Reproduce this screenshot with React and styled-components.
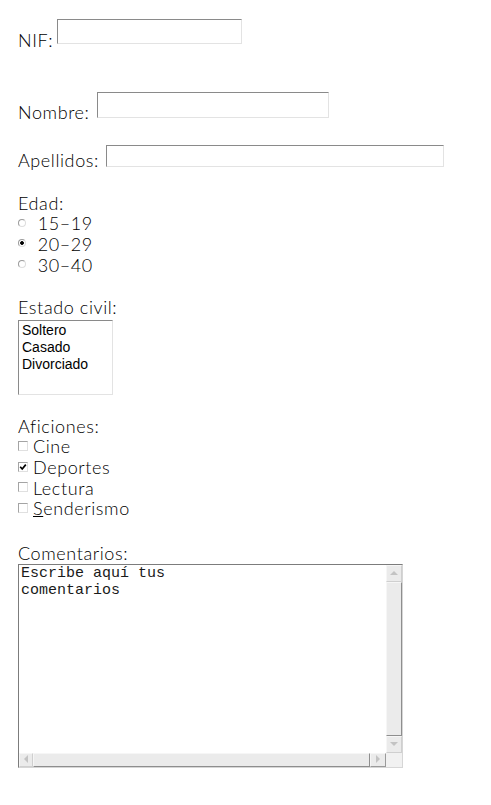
import React from 'react'
import styled, { createGlobalStyle } from 'styled-components'

const GlobalStyle = createGlobalStyle`
  html, body {
    margin: 0;
    padding: 0;
    background: #fff;
  }
  body {
    font-family: Lato, "Open Sans", sans-serif;
    font-weight: 300;
    font-size: 18px;
    line-height: 20.7px;
    letter-spacing: 0.6px;
    color: #000;
  }
`

const Form = styled.form`
  display: flex;
  flex-direction: column;
  align-items: flex-start;
  padding: 0 0 30px 18px;
`

const FieldRow = styled.div`
  display: flex;
  align-items: flex-start;
  gap: 3px;
  margin-top: ${p => p.$top}px;
`

const Label = styled.label`
  display: block;
  white-space: nowrap;
  margin-top: ${p => p.$drop || 0}px;
  ${p => p.$w && `width: ${p.$w}px;`}
`

const sunken = `
  border: 1px solid;
  border-color: #8a8a8a #e3e3e3 #e3e3e3 #8a8a8a;
`

const TextInput = styled.input`
  box-sizing: border-box;
  width: ${p => p.$w}px;
  height: ${p => p.$h}px;
  margin: 0;
  padding: 1px 3px;
  ${sunken}
  background: #fff;
  font: 14px "Liberation Sans", Arial, sans-serif;
  letter-spacing: 0;
  outline: none;
`

const Group = styled.div`
  display: flex;
  flex-direction: column;
  align-items: flex-start;
  margin-top: ${p => p.$top}px;
`

const OptionLine = styled.label`
  display: flex;
  align-items: flex-start;
  white-space: nowrap;
`

const Radio = styled.input.attrs({ type: 'radio' })`
  appearance: none;
  box-sizing: border-box;
  width: 8px;
  height: 8px;
  margin: 5.3px 11.7px 0 0;
  border-radius: 50%;
  border: 1px solid;
  border-color: #9c9c9c #dedede #dedede #9c9c9c;
  background: #fff;

  &:checked {
    background: radial-gradient(circle at center, #000 0 1.5px, #fff 2.2px);
  }
`

const CheckBox = styled.span`
  box-sizing: border-box;
  display: flex;
  align-items: center;
  justify-content: center;
  width: 10px;
  height: 10px;
  margin: 4.6px 5px 0 0;
  border: 1px solid;
  border-color: #a4a4a4 #e0e0e0 #e0e0e0 #a4a4a4;
  background: #fff;
`

const ListBox = styled.div`
  box-sizing: border-box;
  width: 95px;
  height: 75px;
  margin-top: 2.6px;
  padding: 1px 3px;
  ${sunken}
  font: 14px/17px "Liberation Sans", Arial, sans-serif;
  letter-spacing: 0;
  color: #000;
`

const ListItem = styled.div`
  white-space: nowrap;
`

const TextFrame = styled.div`
  box-sizing: border-box;
  width: 385px;
  height: 204px;
  margin-top: 0.6px;
  border: 1px solid;
  border-color: #7c7c7c #d6d6d6 #d6d6d6 #7c7c7c;
  display: grid;
  grid-template-columns: 1fr 16px;
  grid-template-rows: 1fr 14px;
  background: #fff;
`

const TextArea = styled.textarea`
  box-sizing: border-box;
  width: 100%;
  height: 100%;
  margin: 0;
  padding: 0 2px;
  border: none;
  outline: none;
  resize: none;
  overflow: hidden;
  background: transparent;
  color: #1a1a1a;
  font: 15px/17px "Liberation Mono", "Courier New", monospace;
  letter-spacing: 0;
`

const ScrollBar = styled.div`
  display: flex;
  flex-direction: ${p => (p.$vertical ? 'column' : 'row')};
  background: #ececec;
`

const ScrollButton = styled.div`
  box-sizing: border-box;
  flex: 0 0 ${p => p.$size}px;
  display: flex;
  align-items: center;
  justify-content: center;
  border: 1px solid;
  border-color: ${p => (p.$dark ? '#f6f6f6 #9a9a9a #9a9a9a #f6f6f6' : '#f6f6f6 #cfcfcf #cfcfcf #f6f6f6')};
  background: #ebebeb;
`

const ScrollTrack = styled.div`
  box-sizing: border-box;
  flex: 1;
  border: 1px solid;
  border-color: #f6f6f6 #8e8e8e #8e8e8e #f6f6f6;
  background: #ebebeb;
`

const Corner = styled.div`
  background: #f1f1f1;
`

const Arrow = ({ dir }) => {
  const pts = {
    up: '0,4 4,0 8,4',
    down: '0,0 8,0 4,4',
    left: '4,0 4,8 0,4',
    right: '0,0 4,4 0,8',
  }[dir]
  const horiz = dir === 'left' || dir === 'right'
  return (
    <svg width={horiz ? 5 : 9} height={horiz ? 9 : 5} viewBox={horiz ? '0 0 5 9' : '0 0 9 5'}>
      <polygon points={pts} fill="#c3c3c3" />
    </svg>
  )
}

const Tick = () => (
  <svg width="8" height="8" viewBox="0 0 8 8">
    <path d="M1.2 3.8 L3.2 6 L6.8 1.6" fill="none" stroke="#000" strokeWidth="1.7" />
  </svg>
)

const edades = [
  { value: '15-19', checked: false },
  { value: '20-29', checked: true },
  { value: '30-40', checked: false },
]

const aficiones = [
  { label: 'Cine', checked: false },
  { label: 'Deportes', checked: true },
  { label: 'Lectura', checked: false },
  { label: <><u>S</u>enderismo</>, checked: false },
]

export default function App() {
  return (
    <>
      <GlobalStyle />
      <Form onSubmit={e => e.preventDefault()}>
        <FieldRow $top={19}>
          <Label $drop={10.7} $w={36} htmlFor="nif">NIF:</Label>
          <TextInput id="nif" $w={185} $h={25} />
        </FieldRow>

        <FieldRow $top={41.6}>
          <Label $drop={9.7} $w={76} htmlFor="nombre">Nombre:</Label>
          <TextInput id="nombre" $w={232} $h={26} />
        </FieldRow>

        <FieldRow $top={22.6}>
          <Label $drop={4.7} $w={85} htmlFor="apellidos">Apellidos:</Label>
          <TextInput id="apellidos" $w={338} $h={22} />
        </FieldRow>

        <Group $top={22.3}>
          <Label>Edad:</Label>
          {edades.map(e => (
            <OptionLine key={e.value}>
              <Radio name="edad" value={e.value} defaultChecked={e.checked} />
              {e.value.replace('-', '\u2013')}
            </OptionLine>
          ))}
        </Group>

        <Group $top={21.2}>
          <Label>Estado civil:</Label>
          <ListBox role="listbox">
            <ListItem>Soltero</ListItem>
            <ListItem>Casado</ListItem>
            <ListItem>Divorciado</ListItem>
          </ListBox>
        </Group>

        <Group $top={20.7}>
          <Label>Aficiones:</Label>
          {aficiones.map((a, i) => (
            <OptionLine key={i}>
              <CheckBox>{a.checked && <Tick />}</CheckBox>
              {a.label}
            </OptionLine>
          ))}
        </Group>

        <Group $top={23.5}>
          <Label htmlFor="comentarios">Comentarios:</Label>
          <TextFrame>
            <TextArea id="comentarios" defaultValue={'Escribe aquí tus\ncomentarios'} />
            <ScrollBar $vertical>
              <ScrollButton $size={17}><Arrow dir="up" /></ScrollButton>
              <ScrollTrack />
              <ScrollButton $size={17}><Arrow dir="down" /></ScrollButton>
            </ScrollBar>
            <ScrollBar>
              <ScrollButton $size={14}><Arrow dir="left" /></ScrollButton>
              <ScrollTrack />
              <ScrollButton $size={16} $dark><Arrow dir="right" /></ScrollButton>
            </ScrollBar>
            <Corner />
          </TextFrame>
        </Group>
      </Form>
    </>
  )
}
